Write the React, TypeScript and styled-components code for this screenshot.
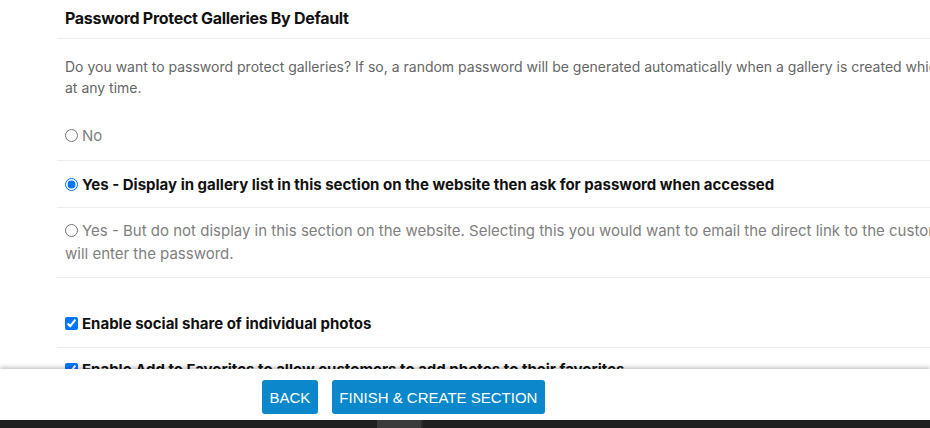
import * as React from "react";
import styled, { createGlobalStyle } from "styled-components";

const GlobalStyle = createGlobalStyle`
    html, body {
        margin: 0;
        padding: 0;
        background: #ffffff;
        overflow: hidden;
    }
    body {
        font-family: Inter, "Noto Sans", Arial, sans-serif;
        -webkit-font-smoothing: antialiased;
    }
`;

const Page = styled.div`
    width: 100vw;
    height: 100vh;
    overflow: hidden;
    position: relative;
`;

const Settings = styled.div`
    width: 988px;
    margin-left: 57px;
    display: flex;
    flex-direction: column;
`;

const Row = styled.div<{ $top: number; $bottom: number; $noBorder?: boolean }>`
    padding: ${p => p.$top}px 8px ${p => p.$bottom}px;
    border-bottom: ${p => (p.$noBorder ? "none" : "1px solid #ececec")};
`;

const Title = styled.div`
    font-size: 16px;
    font-weight: 700;
    line-height: 20px;
    color: #111111;
    letter-spacing: -0.3px;
`;

const Description = styled.p`
    margin: 0 0 27px;
    font-size: 14px;
    line-height: 21px;
    color: #666666;
`;

const Option = styled.label<{ $strong?: boolean; $lineHeight?: number }>`
    display: block;
    font-size: 15px;
    line-height: ${p => p.$lineHeight ?? 21}px;
    font-weight: ${p => (p.$strong ? 700 : 400)};
    color: ${p => (p.$strong ? "#111111" : "#808080")};
`;

const Radio = styled.input.attrs({ type: "radio" })`
    width: 13px;
    height: 13px;
    margin: 0 4px 0 0;
    vertical-align: -1px;
`;

const Checkbox = styled.input.attrs({ type: "checkbox" })`
    width: 13px;
    height: 13px;
    margin: 0 4px 0 0;
    vertical-align: -1px;
`;

const Footer = styled.div`
    position: fixed;
    left: 0;
    right: 0;
    bottom: 0;
    display: flex;
    flex-direction: column;
    background: #ffffff;
    box-shadow: 0 -2px 4px rgba(0, 0, 0, 0.22);
`;

const ButtonBar = styled.div`
    height: 51px;
    display: flex;
    align-items: flex-start;
    gap: 14px;
    padding: 11px 0 0 262px;
    box-sizing: border-box;
`;

const Button = styled.button`
    height: 34px;
    padding: 0 7.5px;
    border: none;
    border-radius: 3px;
    background: #0a88cb;
    color: #ffffff;
    font-family: "Liberation Sans", Arial, sans-serif;
    font-size: 15px;
    text-transform: uppercase;
    cursor: pointer;
`;

const Taskbar = styled.div`
    height: 8px;
    background: #1f1f1f;
    display: flex;
    padding-left: 377px;
`;

const TaskbarItem = styled.div`
    width: 44px;
    height: 100%;
    background: #3b3b3b;
    border-right: 2px solid #2a2a2a;
`;

export default function App() {
    return (
        <Page>
            <GlobalStyle />
            <Settings>
                <Row $top={8} $bottom={10}>
                    <Title>Password Protect Galleries By Default</Title>
                </Row>
                <Row $top={17} $bottom={14}>
                    <Description>
                        Do you want to password protect galleries? If so, a random password will be
                        generated automatically when a gallery is created which can be reset at
                        any time.
                    </Description>
                    <Option>
                        <Radio name="protect" />
                        No
                    </Option>
                </Row>
                <Row $top={13} $bottom={12}>
                    <Option $strong>
                        <Radio name="protect" defaultChecked />
                        Yes - Display in gallery list in this section on the website then ask for
                        password when accessed
                    </Option>
                </Row>
                <Row $top={11} $bottom={12}>
                    <Option $lineHeight={23}>
                        <Radio name="protect" />
                        Yes - But do not display in this section on the website. Selecting this you
                        would want to email the direct link to the customer and they will enter the
                        password.
                    </Option>
                </Row>
                <Row $top={35} $bottom={13}>
                    <Option $strong>
                        <Checkbox defaultChecked />
                        Enable social share of individual photos
                    </Option>
                </Row>
                <Row $top={11} $bottom={12}>
                    <Option $strong>
                        <Checkbox defaultChecked />
                        Enable Add to Favorites to allow customers to add photos to their favorites
                    </Option>
                </Row>
            </Settings>
            <Footer>
                <ButtonBar>
                    <Button>Back</Button>
                    <Button>Finish &amp; Create Section</Button>
                </ButtonBar>
                <Taskbar>
                    <TaskbarItem />
                </Taskbar>
            </Footer>
        </Page>
    );
}
